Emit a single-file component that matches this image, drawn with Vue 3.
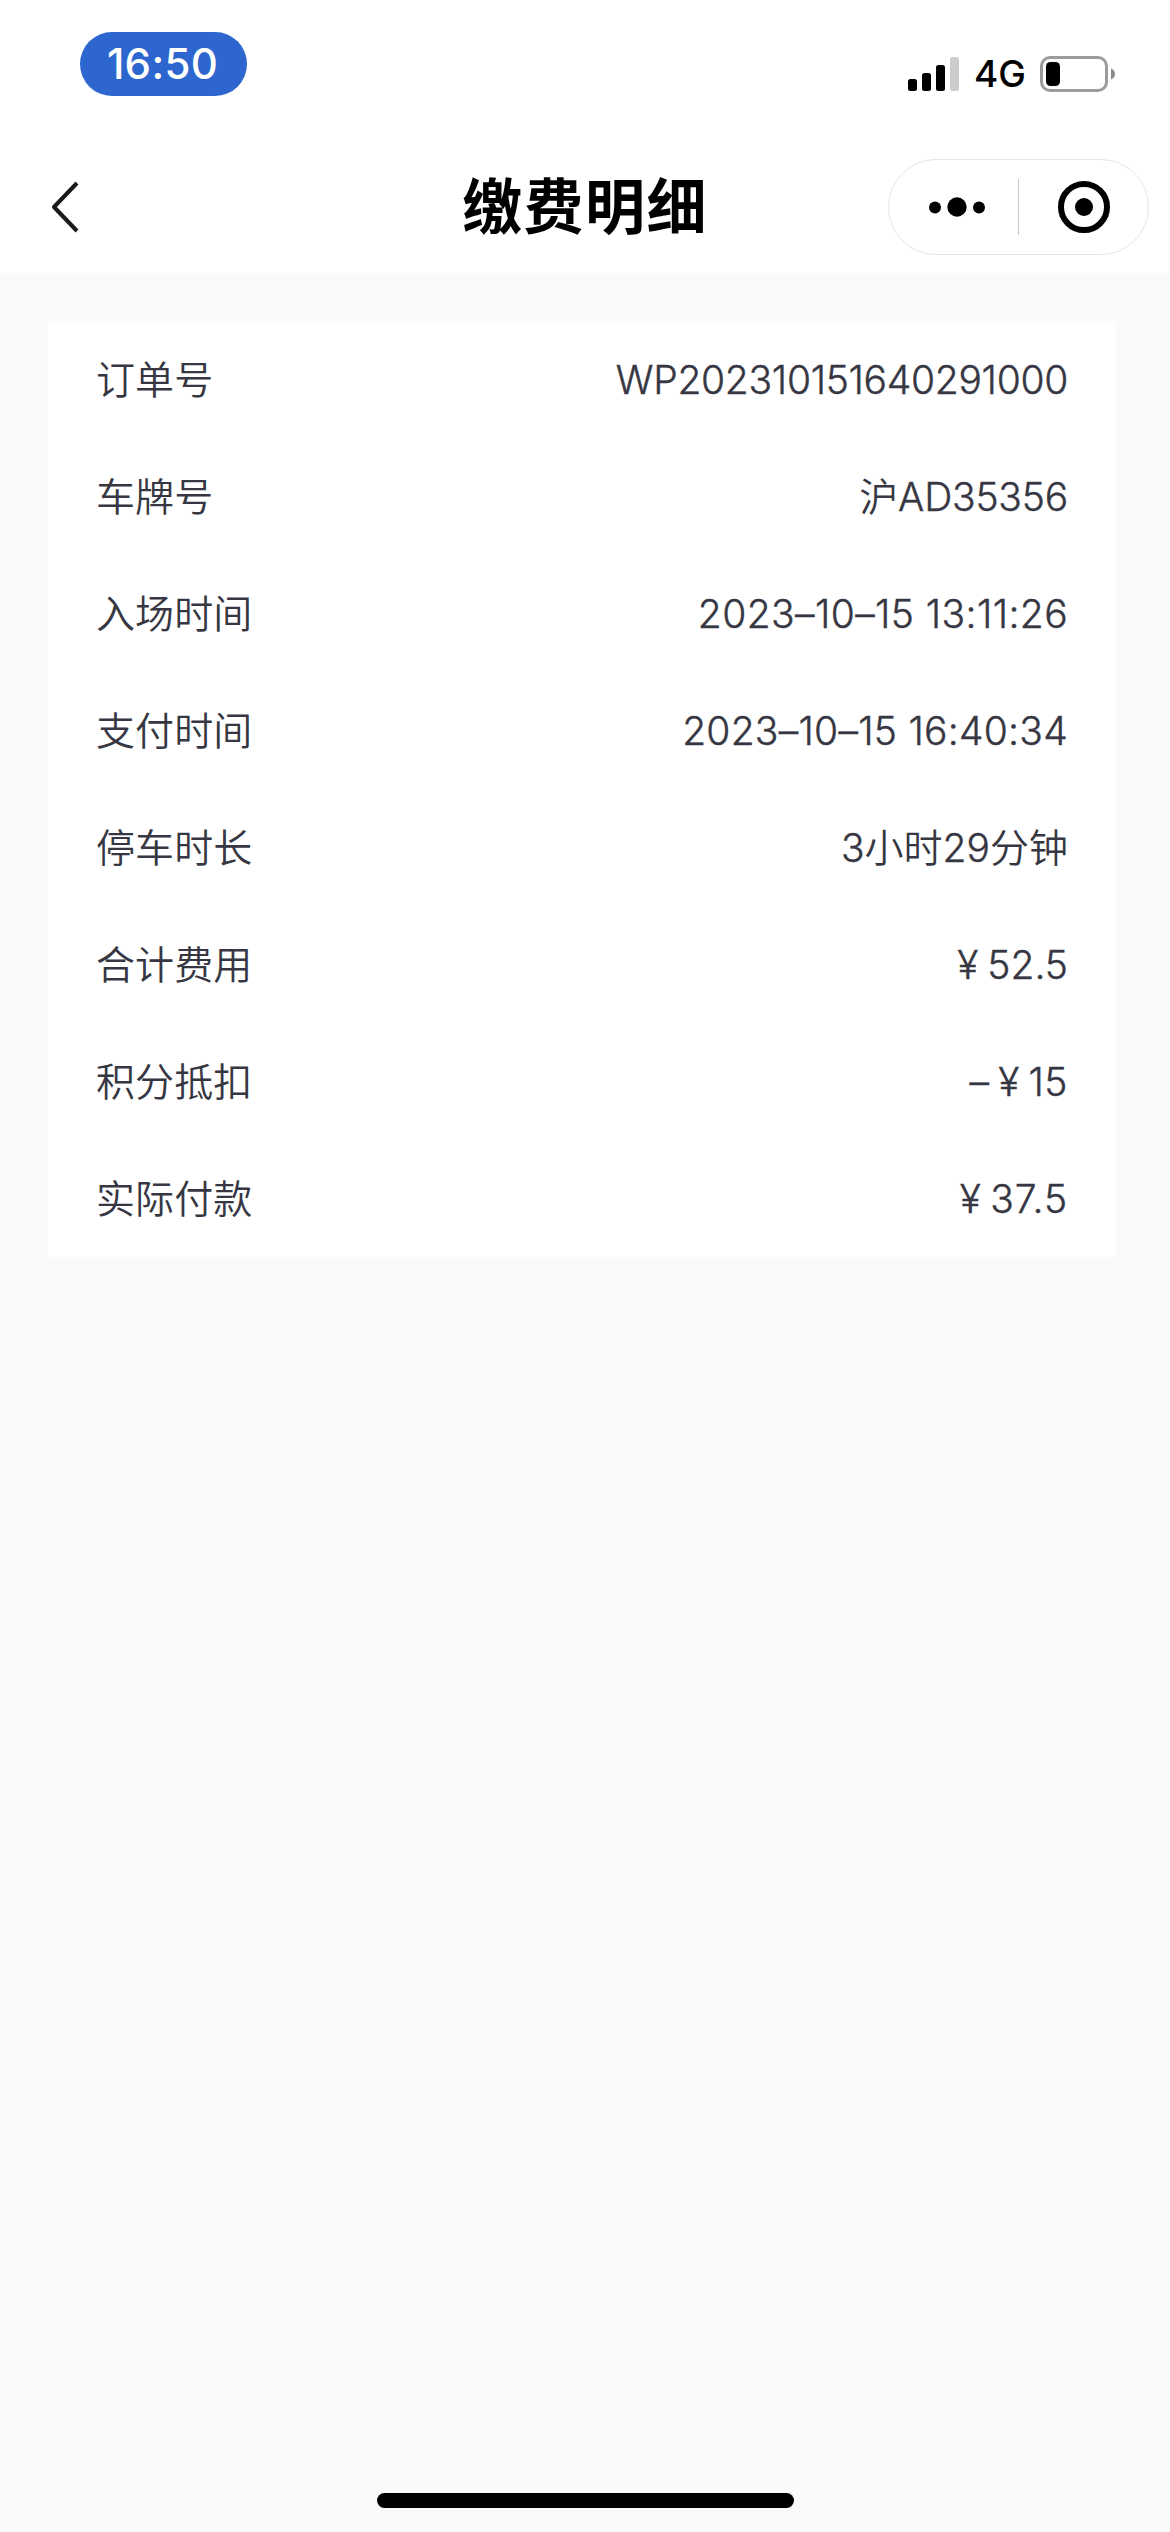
<script setup>
// Digits and Latin letters get a slight stroke so they carry the same weight as the Chinese runs.
const split = (text) =>
  text.match(/[\u4e00-\u9fff]+|[^\u4e00-\u9fff]+/g).map((part) => ({ part, han: /[\u4e00-\u9fff]/.test(part) }))

const rows = [
  { label: '订单号', value: 'WP202310151640291000', fit: 'order' },
  { label: '车牌号', value: '沪AD35356', fit: 'plate' },
  { label: '入场时间', value: '2023–10–15 13:11:26', fit: 'entry' },
  { label: '支付时间', value: '2023–10–15 16:40:34', fit: 'paid' },
  { label: '停车时长', value: '3小时29分钟', fit: 'duration' },
  { label: '合计费用', yen: true, value: '52.5', fit: 'total' },
  { label: '积分抵扣', sign: '–', yen: true, value: '15', fit: 'discount' },
  { label: '实际付款', yen: true, value: '37.5', fit: 'actual' },
].map((row) => ({ ...row, parts: split(row.value) }))
</script>

<template>
  <div class="page">
    <header class="header">
      <div class="status">
        <div class="clock">16:50</div>
        <div class="indicators">
          <svg class="signal" width="52" height="36" viewBox="0 0 52 36">
            <rect x="0" y="23" width="9" height="12" rx="2.5" />
            <rect x="14" y="17" width="9" height="18" rx="2.5" />
            <rect x="28" y="9" width="9" height="26" rx="2.5" />
            <rect x="42" y="1" width="9" height="34" rx="2.5" fill="#ccc" />
          </svg>
          <span class="network">4G</span>
          <svg class="battery" width="76" height="36" viewBox="0 0 76 36">
            <rect x="1.5" y="1.5" width="65" height="33" rx="8.5" fill="none" stroke="#9c9c9c" stroke-width="3" />
            <rect x="6" y="6" width="14" height="24" rx="4.5" />
            <path d="M71 12.5Q75 14.500 75 18T71 23.500Z" fill="#8c8c8c" />
          </svg>
        </div>
      </div>
      <div class="nav">
        <svg class="back" width="28" height="52" viewBox="0 0 28 52">
          <path d="M26 2L3 26L26 50" fill="none" stroke="#1a1a1a" stroke-width="4" stroke-linejoin="round" />
        </svg>
        <h1 class="title">缴费明细</h1>
        <div class="capsule">
          <svg class="more" width="56" height="20" viewBox="0 0 56 20">
            <circle cx="6" cy="10.500" r="6" />
            <circle cx="28" cy="10" r="9.700" />
            <circle cx="50" cy="10.500" r="6" />
          </svg>
          <span class="divider"></span>
          <svg class="close" width="52" height="52" viewBox="0 0 52 52">
            <circle cx="26" cy="26" r="23" fill="none" stroke="#000" stroke-width="6" />
            <circle cx="26" cy="26" r="9" />
          </svg>
        </div>
      </div>
    </header>
    <main class="content">
      <section class="card">
        <div v-for="row in rows" :key="row.label" class="row">
          <span class="label">{{ row.label }}</span>
          <span class="value" :class="row.fit">{{ row.sign }}<span v-if="row.yen" class="yen">¥</span><span v-for="(p, i) in row.parts" :key="i" :class="{ han: p.han }">{{ p.part }}</span></span>
        </div>
      </section>
    </main>
    <footer class="home"><span class="home-bar"></span></footer>
  </div>
</template>

<style>
body {
  margin: 0;
  background: #f8fafc;
}
</style>

<style scoped>
.page {
  display: flex;
  flex-direction: column;
  width: 1170px;
  height: 2532px;
  background: #f8fafc;
  font-family: Inter, 'Noto Sans CJK SC', sans-serif;
  overflow: hidden;
}
.header {
  height: 273px;
  background: #fff;
}
.status {
  display: flex;
  justify-content: space-between;
  align-items: flex-start;
  height: 159px;
  box-sizing: border-box;
  padding: 32px 54px 0 80px;
}
.clock {
  width: 167px;
  height: 64px;
  box-sizing: border-box;
  padding-right: 2px;
  border-radius: 32px;
  background: #2c66ce;
  color: #fff;
  font-size: 42px;
  font-weight: 500;
  letter-spacing: 0.3px;
  line-height: 64px;
  text-align: center;
}
.indicators {
  display: flex;
  align-items: center;
  height: 36px;
  padding-top: 24px;
}
.network {
  width: 51px;
  margin: 0 15px 0 14px;
  font-size: 37px;
  font-weight: 500;
  line-height: 36px;
  white-space: nowrap;
}
.nav {
  display: grid;
  grid-template-columns: 1fr auto 1fr;
  align-items: center;
  height: 96px;
  padding: 0 21px;
}
.back {
  margin-left: 30px;
}
.title {
  margin: 0;
  font-size: 60px;
  font-weight: 700;
  line-height: 96px;
  letter-spacing: 1.4px;
}
.capsule {
  display: flex;
  align-items: center;
  justify-self: end;
  width: 261px;
  height: 96px;
  box-sizing: border-box;
  border: 1px solid #e5e5e5;
  border-radius: 48px;
  padding-left: 40px;
}
.divider {
  width: 1px;
  height: 56px;
  margin: 0 39px 0 33px;
  background: #c8c8c8;
}
.content {
  flex: 1;
  padding: 48px 54px 0 48px;
}
.card {
  background: #fff;
}
.row {
  display: flex;
  justify-content: space-between;
  align-items: center;
  height: 117px;
  padding: 0 48px;
  color: #363742;
  font-size: 39px;
  font-weight: 350;
  line-height: 54px;
}
.label {
  letter-spacing: 0.1px;
}
.value {
  white-space: nowrap;
  -webkit-text-stroke: 0.4px #363742;
}
.han {
  -webkit-text-stroke: 0;
}
.order {
  letter-spacing: -0.3px;
}
.plate {
  letter-spacing: -0.2px;
}
.entry {
  letter-spacing: 0.4px;
}
.paid {
  letter-spacing: 0.25px;
}
.discount {
  letter-spacing: 0.5px;
}
.actual {
  letter-spacing: 0.9px;
}
.yen {
  display: inline-block;
  width: 39px;
  text-align: center;
}
.home {
  display: flex;
  justify-content: center;
  height: 39px;
}
.home-bar {
  width: 417px;
  height: 15px;
  border-radius: 8px;
  background: #000;
}
</style>
